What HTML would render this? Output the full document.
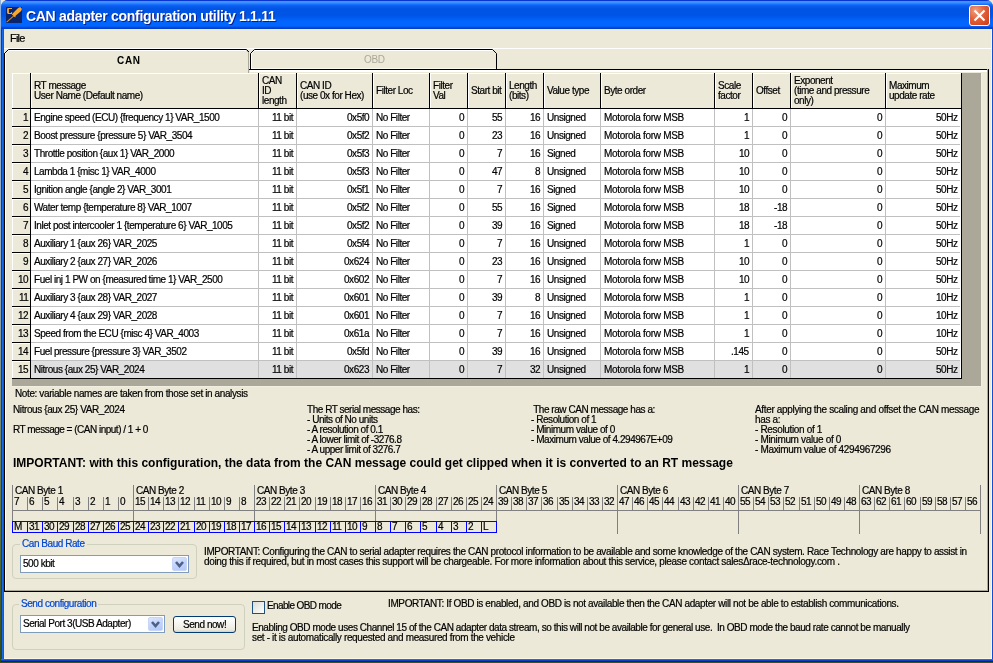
<!DOCTYPE html><html><head><meta charset='utf-8'><style>
*{margin:0;padding:0;box-sizing:border-box}
html,body{width:993px;height:663px;overflow:hidden}
body{position:relative;background:#ece9d8;font-family:"Liberation Sans",sans-serif}
.a{position:absolute}
.g{will-change:transform}
.t{position:absolute;will-change:transform;-webkit-text-stroke-width:0.2px;font-size:10px;line-height:10px;letter-spacing:-0.45px;white-space:pre;color:#000}
</style></head><body>
<div class=a style='left:0px;top:0px;width:1px;height:663px;background:linear-gradient(#8fb0e0,#9ab 40%,#5a7040 80%,#2f4a1a);'></div>
<div class=a style='left:0px;top:662px;width:993px;height:1px;background:#3a5220;'></div>
<div class=a style='left:1px;top:0;width:992px;height:662px;background:#0a4fe0;border-radius:7px 7px 0 0'></div>
<div class=a style='left:1px;top:29px;width:1px;height:633px;background:#0831d9;'></div>
<div class=a style='left:2px;top:29px;width:1px;height:633px;background:#166aee;'></div>
<div class=a style='left:3px;top:29px;width:1px;height:633px;background:#0f55e6;'></div>
<div class=a style='left:1px;top:659px;width:992px;height:1px;background:#1a6af2;'></div>
<div class=a style='left:1px;top:660px;width:992px;height:1px;background:#0a40d0;'></div>
<div class=a style='left:1px;top:661px;width:992px;height:1px;background:#001ea0;'></div>
<div class=a style='left:1px;top:0;width:992px;height:29px;border-radius:7px 7px 0 0;background:linear-gradient(180deg,#0a36d0 0px,#0a36d0 1px,#3d95ff 1px,#3a90ff 3px,#1a74ff 4px,#0a5cf0 6px,#0054e3 9px,#0055e6 16px,#005ff5 19px,#0066ff 22px,#0066ff 26px,#0052e8 27px,#0040c8 28px,#0040c8 29px)'></div>
<svg class=a style='left:6px;top:7px' width='16' height='16' viewBox='0 0 16 16'>
<rect x='0' y='0' width='16' height='16' fill='#0b2568'/>
<path d='M1.8 1 H6 V2.1 H2.9 V5.9 H5.2 V5 H6.1 V7 H2 L1.1 6.1 V1.7 Z' fill='#f7a934'/>
<path d='M6.6 6.6 L11.6 1.4 Q13.2 0 14.6 0.3 Q16 0.9 15.8 2.6 Q15.6 3.6 14.6 4.4 L9.2 9 Z' fill='#f7a934'/>
<path d='M5.8 7.6 L7 6.4 L9.6 8.8 L9.2 10.6 Z' fill='#f7a934'/>
<path d='M7.8 8.8 L0.6 15.2' stroke='#c98a3a' stroke-width='1.1'/>
</svg>
<div class='a g' style='left:26px;top:9px;font-size:14px;line-height:14px;font-weight:bold;color:#fff;white-space:pre;letter-spacing:-0.3px;text-shadow:1px 1px 0 #0a1e8c'>CAN adapter configuration utility 1.1.11</div>
<div class=a style='left:969px;top:5px;width:21px;height:21px;border:1px solid #fff;border-radius:3px;background:radial-gradient(circle at 30% 25%,#f0a080 0,#e2603a 45%,#cc3a10 100%)'></div>
<svg class=a style='left:969px;top:5px' width='21' height='21'><path d='M5.5 5.5 L15.5 15.5 M15.5 5.5 L5.5 15.5' stroke='#fff' stroke-width='2.2'/></svg>
<div class=a style='left:4px;top:29px;width:988px;height:630px;background:#ece9d8;'></div>
<div class=a style='left:4px;top:658px;width:988px;height:1px;background:#fcf6e0;'></div>
<div class=a style='left:991px;top:29px;width:1px;height:630px;background:#fcf6e0;'></div>
<div class=t style='left:10px;top:35px;font-size:11px;letter-spacing:-0.8px;top:33px;line-height:11px'>File</div>
<div class=a style='left:4px;top:48px;width:987px;height:1px;background:#fff;'></div>
<svg class=a style='left:0;top:44px' width='520' height='30'>
<path d='M4.5 30 L4.5 9.5 L8.5 5.5 L246.5 5.5 L249 8' stroke='#000' fill='none'/>
<path d='M5.5 30 L5.5 9.5 L8.5 6.5 L246 6.5' stroke='#fff' fill='none'/>
<path d='M248.5 30 L248.5 8.5 L246.5 6.5' stroke='#aca899' fill='none'/>
<path d='M250.5 25.5 L250.5 9.5 L254.5 5.5 L492.5 5.5 L496.5 9.5 L496.5 25.5' stroke='#000' fill='none'/>
<path d='M251.5 25 L251.5 9.5 L254.5 6.5 L492 6.5' stroke='#fff' fill='none'/>
<path d='M252 24.5 L495.5 24.5' stroke='#fbf8ec' fill='none'/>
<path d='M249 25.5 L520 25.5' stroke='#000' fill='none'/>
</svg>
<div class='a g' style='left:117px;top:56px;font-size:10px;line-height:10px;font-weight:bold;letter-spacing:0.7px;white-space:pre'>CAN</div>
<div class='a g' style='left:364px;top:55px;font-size:10px;line-height:10px;letter-spacing:-0.4px;color:#aca899;white-space:pre'>OBD</div>
<div class=a style='left:496px;top:69px;width:493px;height:1px;background:#000;'></div>
<div class=a style='left:250px;top:70px;width:738px;height:2px;background:#fff;'></div>
<div class=a style='left:4px;top:53px;width:1px;height:539px;background:#000;'></div>
<div class=a style='left:5px;top:53px;width:1px;height:537px;background:#fff;'></div>
<div class=a style='left:987px;top:69px;width:1px;height:522px;background:#aca899;'></div>
<div class=a style='left:988px;top:69px;width:1px;height:523px;background:#000;'></div>
<div class=a style='left:5px;top:590px;width:983px;height:1px;background:#aca899;'></div>
<div class=a style='left:4px;top:591px;width:985px;height:1px;background:#000;'></div>
<div class=a style='left:12px;top:73px;width:969px;height:313px;background:#aca899;'></div>
<div class=a style='left:981px;top:73px;width:1px;height:314px;background:#f1efe2;'></div>
<div class=a style='left:12px;top:386px;width:970px;height:1px;background:#f1efe2;'></div>
<div class=a style='left:12px;top:73px;width:950px;height:306px;background:#000;'></div>
<div class=a style='left:12px;top:73px;width:18px;height:35px;background:#ece9d8;border-top:1px solid #fff;border-left:1px solid #fff'></div>
<div class=a style='left:31px;top:73px;width:227px;height:35px;background:#ece9d8;border-top:1px solid #fff;border-left:1px solid #fff'></div>
<div class=a style='left:259px;top:73px;width:37px;height:35px;background:#ece9d8;border-top:1px solid #fff;border-left:1px solid #fff'></div>
<div class=a style='left:297px;top:73px;width:75px;height:35px;background:#ece9d8;border-top:1px solid #fff;border-left:1px solid #fff'></div>
<div class=a style='left:373px;top:73px;width:56px;height:35px;background:#ece9d8;border-top:1px solid #fff;border-left:1px solid #fff'></div>
<div class=a style='left:430px;top:73px;width:37px;height:35px;background:#ece9d8;border-top:1px solid #fff;border-left:1px solid #fff'></div>
<div class=a style='left:468px;top:73px;width:37px;height:35px;background:#ece9d8;border-top:1px solid #fff;border-left:1px solid #fff'></div>
<div class=a style='left:506px;top:73px;width:37px;height:35px;background:#ece9d8;border-top:1px solid #fff;border-left:1px solid #fff'></div>
<div class=a style='left:544px;top:73px;width:56px;height:35px;background:#ece9d8;border-top:1px solid #fff;border-left:1px solid #fff'></div>
<div class=a style='left:601px;top:73px;width:113px;height:35px;background:#ece9d8;border-top:1px solid #fff;border-left:1px solid #fff'></div>
<div class=a style='left:715px;top:73px;width:37px;height:35px;background:#ece9d8;border-top:1px solid #fff;border-left:1px solid #fff'></div>
<div class=a style='left:753px;top:73px;width:37px;height:35px;background:#ece9d8;border-top:1px solid #fff;border-left:1px solid #fff'></div>
<div class=a style='left:791px;top:73px;width:94px;height:35px;background:#ece9d8;border-top:1px solid #fff;border-left:1px solid #fff'></div>
<div class=a style='left:886px;top:73px;width:75px;height:35px;background:#ece9d8;border-top:1px solid #fff;border-left:1px solid #fff'></div>
<div class=a style='left:12px;top:109px;width:18px;height:17px;background:#ece9d8;border-top:1px solid #fff;border-left:1px solid #fff'></div>
<div class=a style='left:12px;top:127px;width:18px;height:17px;background:#ece9d8;border-top:1px solid #fff;border-left:1px solid #fff'></div>
<div class=a style='left:12px;top:145px;width:18px;height:17px;background:#ece9d8;border-top:1px solid #fff;border-left:1px solid #fff'></div>
<div class=a style='left:12px;top:163px;width:18px;height:17px;background:#ece9d8;border-top:1px solid #fff;border-left:1px solid #fff'></div>
<div class=a style='left:12px;top:181px;width:18px;height:17px;background:#ece9d8;border-top:1px solid #fff;border-left:1px solid #fff'></div>
<div class=a style='left:12px;top:199px;width:18px;height:17px;background:#ece9d8;border-top:1px solid #fff;border-left:1px solid #fff'></div>
<div class=a style='left:12px;top:217px;width:18px;height:17px;background:#ece9d8;border-top:1px solid #fff;border-left:1px solid #fff'></div>
<div class=a style='left:12px;top:235px;width:18px;height:17px;background:#ece9d8;border-top:1px solid #fff;border-left:1px solid #fff'></div>
<div class=a style='left:12px;top:253px;width:18px;height:17px;background:#ece9d8;border-top:1px solid #fff;border-left:1px solid #fff'></div>
<div class=a style='left:12px;top:271px;width:18px;height:17px;background:#ece9d8;border-top:1px solid #fff;border-left:1px solid #fff'></div>
<div class=a style='left:12px;top:289px;width:18px;height:17px;background:#ece9d8;border-top:1px solid #fff;border-left:1px solid #fff'></div>
<div class=a style='left:12px;top:307px;width:18px;height:17px;background:#ece9d8;border-top:1px solid #fff;border-left:1px solid #fff'></div>
<div class=a style='left:12px;top:325px;width:18px;height:17px;background:#ece9d8;border-top:1px solid #fff;border-left:1px solid #fff'></div>
<div class=a style='left:12px;top:343px;width:18px;height:17px;background:#ece9d8;border-top:1px solid #fff;border-left:1px solid #fff'></div>
<div class=a style='left:12px;top:361px;width:18px;height:17px;background:#ece9d8;border-top:1px solid #fff;border-left:1px solid #fff'></div>
<div class=a style='left:31px;top:109px;width:930px;height:269px;background:#c0c0c0;'></div>
<div class=a style='left:31px;top:109px;width:227px;height:17px;background:#fff;'></div>
<div class=a style='left:259px;top:109px;width:37px;height:17px;background:#fff;'></div>
<div class=a style='left:297px;top:109px;width:75px;height:17px;background:#fff;'></div>
<div class=a style='left:373px;top:109px;width:56px;height:17px;background:#fff;'></div>
<div class=a style='left:430px;top:109px;width:37px;height:17px;background:#fff;'></div>
<div class=a style='left:468px;top:109px;width:37px;height:17px;background:#fff;'></div>
<div class=a style='left:506px;top:109px;width:37px;height:17px;background:#fff;'></div>
<div class=a style='left:544px;top:109px;width:56px;height:17px;background:#fff;'></div>
<div class=a style='left:601px;top:109px;width:113px;height:17px;background:#fff;'></div>
<div class=a style='left:715px;top:109px;width:37px;height:17px;background:#fff;'></div>
<div class=a style='left:753px;top:109px;width:37px;height:17px;background:#fff;'></div>
<div class=a style='left:791px;top:109px;width:94px;height:17px;background:#fff;'></div>
<div class=a style='left:886px;top:109px;width:75px;height:17px;background:#fff;'></div>
<div class=a style='left:31px;top:127px;width:227px;height:17px;background:#fff;'></div>
<div class=a style='left:259px;top:127px;width:37px;height:17px;background:#fff;'></div>
<div class=a style='left:297px;top:127px;width:75px;height:17px;background:#fff;'></div>
<div class=a style='left:373px;top:127px;width:56px;height:17px;background:#fff;'></div>
<div class=a style='left:430px;top:127px;width:37px;height:17px;background:#fff;'></div>
<div class=a style='left:468px;top:127px;width:37px;height:17px;background:#fff;'></div>
<div class=a style='left:506px;top:127px;width:37px;height:17px;background:#fff;'></div>
<div class=a style='left:544px;top:127px;width:56px;height:17px;background:#fff;'></div>
<div class=a style='left:601px;top:127px;width:113px;height:17px;background:#fff;'></div>
<div class=a style='left:715px;top:127px;width:37px;height:17px;background:#fff;'></div>
<div class=a style='left:753px;top:127px;width:37px;height:17px;background:#fff;'></div>
<div class=a style='left:791px;top:127px;width:94px;height:17px;background:#fff;'></div>
<div class=a style='left:886px;top:127px;width:75px;height:17px;background:#fff;'></div>
<div class=a style='left:31px;top:145px;width:227px;height:17px;background:#fff;'></div>
<div class=a style='left:259px;top:145px;width:37px;height:17px;background:#fff;'></div>
<div class=a style='left:297px;top:145px;width:75px;height:17px;background:#fff;'></div>
<div class=a style='left:373px;top:145px;width:56px;height:17px;background:#fff;'></div>
<div class=a style='left:430px;top:145px;width:37px;height:17px;background:#fff;'></div>
<div class=a style='left:468px;top:145px;width:37px;height:17px;background:#fff;'></div>
<div class=a style='left:506px;top:145px;width:37px;height:17px;background:#fff;'></div>
<div class=a style='left:544px;top:145px;width:56px;height:17px;background:#fff;'></div>
<div class=a style='left:601px;top:145px;width:113px;height:17px;background:#fff;'></div>
<div class=a style='left:715px;top:145px;width:37px;height:17px;background:#fff;'></div>
<div class=a style='left:753px;top:145px;width:37px;height:17px;background:#fff;'></div>
<div class=a style='left:791px;top:145px;width:94px;height:17px;background:#fff;'></div>
<div class=a style='left:886px;top:145px;width:75px;height:17px;background:#fff;'></div>
<div class=a style='left:31px;top:163px;width:227px;height:17px;background:#fff;'></div>
<div class=a style='left:259px;top:163px;width:37px;height:17px;background:#fff;'></div>
<div class=a style='left:297px;top:163px;width:75px;height:17px;background:#fff;'></div>
<div class=a style='left:373px;top:163px;width:56px;height:17px;background:#fff;'></div>
<div class=a style='left:430px;top:163px;width:37px;height:17px;background:#fff;'></div>
<div class=a style='left:468px;top:163px;width:37px;height:17px;background:#fff;'></div>
<div class=a style='left:506px;top:163px;width:37px;height:17px;background:#fff;'></div>
<div class=a style='left:544px;top:163px;width:56px;height:17px;background:#fff;'></div>
<div class=a style='left:601px;top:163px;width:113px;height:17px;background:#fff;'></div>
<div class=a style='left:715px;top:163px;width:37px;height:17px;background:#fff;'></div>
<div class=a style='left:753px;top:163px;width:37px;height:17px;background:#fff;'></div>
<div class=a style='left:791px;top:163px;width:94px;height:17px;background:#fff;'></div>
<div class=a style='left:886px;top:163px;width:75px;height:17px;background:#fff;'></div>
<div class=a style='left:31px;top:181px;width:227px;height:17px;background:#fff;'></div>
<div class=a style='left:259px;top:181px;width:37px;height:17px;background:#fff;'></div>
<div class=a style='left:297px;top:181px;width:75px;height:17px;background:#fff;'></div>
<div class=a style='left:373px;top:181px;width:56px;height:17px;background:#fff;'></div>
<div class=a style='left:430px;top:181px;width:37px;height:17px;background:#fff;'></div>
<div class=a style='left:468px;top:181px;width:37px;height:17px;background:#fff;'></div>
<div class=a style='left:506px;top:181px;width:37px;height:17px;background:#fff;'></div>
<div class=a style='left:544px;top:181px;width:56px;height:17px;background:#fff;'></div>
<div class=a style='left:601px;top:181px;width:113px;height:17px;background:#fff;'></div>
<div class=a style='left:715px;top:181px;width:37px;height:17px;background:#fff;'></div>
<div class=a style='left:753px;top:181px;width:37px;height:17px;background:#fff;'></div>
<div class=a style='left:791px;top:181px;width:94px;height:17px;background:#fff;'></div>
<div class=a style='left:886px;top:181px;width:75px;height:17px;background:#fff;'></div>
<div class=a style='left:31px;top:199px;width:227px;height:17px;background:#fff;'></div>
<div class=a style='left:259px;top:199px;width:37px;height:17px;background:#fff;'></div>
<div class=a style='left:297px;top:199px;width:75px;height:17px;background:#fff;'></div>
<div class=a style='left:373px;top:199px;width:56px;height:17px;background:#fff;'></div>
<div class=a style='left:430px;top:199px;width:37px;height:17px;background:#fff;'></div>
<div class=a style='left:468px;top:199px;width:37px;height:17px;background:#fff;'></div>
<div class=a style='left:506px;top:199px;width:37px;height:17px;background:#fff;'></div>
<div class=a style='left:544px;top:199px;width:56px;height:17px;background:#fff;'></div>
<div class=a style='left:601px;top:199px;width:113px;height:17px;background:#fff;'></div>
<div class=a style='left:715px;top:199px;width:37px;height:17px;background:#fff;'></div>
<div class=a style='left:753px;top:199px;width:37px;height:17px;background:#fff;'></div>
<div class=a style='left:791px;top:199px;width:94px;height:17px;background:#fff;'></div>
<div class=a style='left:886px;top:199px;width:75px;height:17px;background:#fff;'></div>
<div class=a style='left:31px;top:217px;width:227px;height:17px;background:#fff;'></div>
<div class=a style='left:259px;top:217px;width:37px;height:17px;background:#fff;'></div>
<div class=a style='left:297px;top:217px;width:75px;height:17px;background:#fff;'></div>
<div class=a style='left:373px;top:217px;width:56px;height:17px;background:#fff;'></div>
<div class=a style='left:430px;top:217px;width:37px;height:17px;background:#fff;'></div>
<div class=a style='left:468px;top:217px;width:37px;height:17px;background:#fff;'></div>
<div class=a style='left:506px;top:217px;width:37px;height:17px;background:#fff;'></div>
<div class=a style='left:544px;top:217px;width:56px;height:17px;background:#fff;'></div>
<div class=a style='left:601px;top:217px;width:113px;height:17px;background:#fff;'></div>
<div class=a style='left:715px;top:217px;width:37px;height:17px;background:#fff;'></div>
<div class=a style='left:753px;top:217px;width:37px;height:17px;background:#fff;'></div>
<div class=a style='left:791px;top:217px;width:94px;height:17px;background:#fff;'></div>
<div class=a style='left:886px;top:217px;width:75px;height:17px;background:#fff;'></div>
<div class=a style='left:31px;top:235px;width:227px;height:17px;background:#fff;'></div>
<div class=a style='left:259px;top:235px;width:37px;height:17px;background:#fff;'></div>
<div class=a style='left:297px;top:235px;width:75px;height:17px;background:#fff;'></div>
<div class=a style='left:373px;top:235px;width:56px;height:17px;background:#fff;'></div>
<div class=a style='left:430px;top:235px;width:37px;height:17px;background:#fff;'></div>
<div class=a style='left:468px;top:235px;width:37px;height:17px;background:#fff;'></div>
<div class=a style='left:506px;top:235px;width:37px;height:17px;background:#fff;'></div>
<div class=a style='left:544px;top:235px;width:56px;height:17px;background:#fff;'></div>
<div class=a style='left:601px;top:235px;width:113px;height:17px;background:#fff;'></div>
<div class=a style='left:715px;top:235px;width:37px;height:17px;background:#fff;'></div>
<div class=a style='left:753px;top:235px;width:37px;height:17px;background:#fff;'></div>
<div class=a style='left:791px;top:235px;width:94px;height:17px;background:#fff;'></div>
<div class=a style='left:886px;top:235px;width:75px;height:17px;background:#fff;'></div>
<div class=a style='left:31px;top:253px;width:227px;height:17px;background:#fff;'></div>
<div class=a style='left:259px;top:253px;width:37px;height:17px;background:#fff;'></div>
<div class=a style='left:297px;top:253px;width:75px;height:17px;background:#fff;'></div>
<div class=a style='left:373px;top:253px;width:56px;height:17px;background:#fff;'></div>
<div class=a style='left:430px;top:253px;width:37px;height:17px;background:#fff;'></div>
<div class=a style='left:468px;top:253px;width:37px;height:17px;background:#fff;'></div>
<div class=a style='left:506px;top:253px;width:37px;height:17px;background:#fff;'></div>
<div class=a style='left:544px;top:253px;width:56px;height:17px;background:#fff;'></div>
<div class=a style='left:601px;top:253px;width:113px;height:17px;background:#fff;'></div>
<div class=a style='left:715px;top:253px;width:37px;height:17px;background:#fff;'></div>
<div class=a style='left:753px;top:253px;width:37px;height:17px;background:#fff;'></div>
<div class=a style='left:791px;top:253px;width:94px;height:17px;background:#fff;'></div>
<div class=a style='left:886px;top:253px;width:75px;height:17px;background:#fff;'></div>
<div class=a style='left:31px;top:271px;width:227px;height:17px;background:#fff;'></div>
<div class=a style='left:259px;top:271px;width:37px;height:17px;background:#fff;'></div>
<div class=a style='left:297px;top:271px;width:75px;height:17px;background:#fff;'></div>
<div class=a style='left:373px;top:271px;width:56px;height:17px;background:#fff;'></div>
<div class=a style='left:430px;top:271px;width:37px;height:17px;background:#fff;'></div>
<div class=a style='left:468px;top:271px;width:37px;height:17px;background:#fff;'></div>
<div class=a style='left:506px;top:271px;width:37px;height:17px;background:#fff;'></div>
<div class=a style='left:544px;top:271px;width:56px;height:17px;background:#fff;'></div>
<div class=a style='left:601px;top:271px;width:113px;height:17px;background:#fff;'></div>
<div class=a style='left:715px;top:271px;width:37px;height:17px;background:#fff;'></div>
<div class=a style='left:753px;top:271px;width:37px;height:17px;background:#fff;'></div>
<div class=a style='left:791px;top:271px;width:94px;height:17px;background:#fff;'></div>
<div class=a style='left:886px;top:271px;width:75px;height:17px;background:#fff;'></div>
<div class=a style='left:31px;top:289px;width:227px;height:17px;background:#fff;'></div>
<div class=a style='left:259px;top:289px;width:37px;height:17px;background:#fff;'></div>
<div class=a style='left:297px;top:289px;width:75px;height:17px;background:#fff;'></div>
<div class=a style='left:373px;top:289px;width:56px;height:17px;background:#fff;'></div>
<div class=a style='left:430px;top:289px;width:37px;height:17px;background:#fff;'></div>
<div class=a style='left:468px;top:289px;width:37px;height:17px;background:#fff;'></div>
<div class=a style='left:506px;top:289px;width:37px;height:17px;background:#fff;'></div>
<div class=a style='left:544px;top:289px;width:56px;height:17px;background:#fff;'></div>
<div class=a style='left:601px;top:289px;width:113px;height:17px;background:#fff;'></div>
<div class=a style='left:715px;top:289px;width:37px;height:17px;background:#fff;'></div>
<div class=a style='left:753px;top:289px;width:37px;height:17px;background:#fff;'></div>
<div class=a style='left:791px;top:289px;width:94px;height:17px;background:#fff;'></div>
<div class=a style='left:886px;top:289px;width:75px;height:17px;background:#fff;'></div>
<div class=a style='left:31px;top:307px;width:227px;height:17px;background:#fff;'></div>
<div class=a style='left:259px;top:307px;width:37px;height:17px;background:#fff;'></div>
<div class=a style='left:297px;top:307px;width:75px;height:17px;background:#fff;'></div>
<div class=a style='left:373px;top:307px;width:56px;height:17px;background:#fff;'></div>
<div class=a style='left:430px;top:307px;width:37px;height:17px;background:#fff;'></div>
<div class=a style='left:468px;top:307px;width:37px;height:17px;background:#fff;'></div>
<div class=a style='left:506px;top:307px;width:37px;height:17px;background:#fff;'></div>
<div class=a style='left:544px;top:307px;width:56px;height:17px;background:#fff;'></div>
<div class=a style='left:601px;top:307px;width:113px;height:17px;background:#fff;'></div>
<div class=a style='left:715px;top:307px;width:37px;height:17px;background:#fff;'></div>
<div class=a style='left:753px;top:307px;width:37px;height:17px;background:#fff;'></div>
<div class=a style='left:791px;top:307px;width:94px;height:17px;background:#fff;'></div>
<div class=a style='left:886px;top:307px;width:75px;height:17px;background:#fff;'></div>
<div class=a style='left:31px;top:325px;width:227px;height:17px;background:#fff;'></div>
<div class=a style='left:259px;top:325px;width:37px;height:17px;background:#fff;'></div>
<div class=a style='left:297px;top:325px;width:75px;height:17px;background:#fff;'></div>
<div class=a style='left:373px;top:325px;width:56px;height:17px;background:#fff;'></div>
<div class=a style='left:430px;top:325px;width:37px;height:17px;background:#fff;'></div>
<div class=a style='left:468px;top:325px;width:37px;height:17px;background:#fff;'></div>
<div class=a style='left:506px;top:325px;width:37px;height:17px;background:#fff;'></div>
<div class=a style='left:544px;top:325px;width:56px;height:17px;background:#fff;'></div>
<div class=a style='left:601px;top:325px;width:113px;height:17px;background:#fff;'></div>
<div class=a style='left:715px;top:325px;width:37px;height:17px;background:#fff;'></div>
<div class=a style='left:753px;top:325px;width:37px;height:17px;background:#fff;'></div>
<div class=a style='left:791px;top:325px;width:94px;height:17px;background:#fff;'></div>
<div class=a style='left:886px;top:325px;width:75px;height:17px;background:#fff;'></div>
<div class=a style='left:31px;top:343px;width:227px;height:17px;background:#fff;'></div>
<div class=a style='left:259px;top:343px;width:37px;height:17px;background:#fff;'></div>
<div class=a style='left:297px;top:343px;width:75px;height:17px;background:#fff;'></div>
<div class=a style='left:373px;top:343px;width:56px;height:17px;background:#fff;'></div>
<div class=a style='left:430px;top:343px;width:37px;height:17px;background:#fff;'></div>
<div class=a style='left:468px;top:343px;width:37px;height:17px;background:#fff;'></div>
<div class=a style='left:506px;top:343px;width:37px;height:17px;background:#fff;'></div>
<div class=a style='left:544px;top:343px;width:56px;height:17px;background:#fff;'></div>
<div class=a style='left:601px;top:343px;width:113px;height:17px;background:#fff;'></div>
<div class=a style='left:715px;top:343px;width:37px;height:17px;background:#fff;'></div>
<div class=a style='left:753px;top:343px;width:37px;height:17px;background:#fff;'></div>
<div class=a style='left:791px;top:343px;width:94px;height:17px;background:#fff;'></div>
<div class=a style='left:886px;top:343px;width:75px;height:17px;background:#fff;'></div>
<div class=a style='left:31px;top:361px;width:227px;height:17px;background:#e0e0e0;'></div>
<div class=a style='left:259px;top:361px;width:37px;height:17px;background:#e0e0e0;'></div>
<div class=a style='left:297px;top:361px;width:75px;height:17px;background:#e0e0e0;'></div>
<div class=a style='left:373px;top:361px;width:56px;height:17px;background:#e0e0e0;'></div>
<div class=a style='left:430px;top:361px;width:37px;height:17px;background:#e0e0e0;'></div>
<div class=a style='left:468px;top:361px;width:37px;height:17px;background:#e0e0e0;'></div>
<div class=a style='left:506px;top:361px;width:37px;height:17px;background:#e0e0e0;'></div>
<div class=a style='left:544px;top:361px;width:56px;height:17px;background:#e0e0e0;'></div>
<div class=a style='left:601px;top:361px;width:113px;height:17px;background:#e0e0e0;'></div>
<div class=a style='left:715px;top:361px;width:37px;height:17px;background:#e0e0e0;'></div>
<div class=a style='left:753px;top:361px;width:37px;height:17px;background:#e0e0e0;'></div>
<div class=a style='left:791px;top:361px;width:94px;height:17px;background:#e0e0e0;'></div>
<div class=a style='left:886px;top:361px;width:75px;height:17px;background:#e0e0e0;'></div>
<div class=a style='left:960px;top:109px;width:1px;height:269px;background:#fff;'></div>
<div class=a style='left:31px;top:378px;width:930px;height:1px;background:#000;'></div>
<div class=t style='left:34px;top:81px;'>RT message</div>
<div class=t style='left:34px;top:91px;'>User Name (Default name)</div>
<div class=t style='left:262px;top:76px;'>CAN</div>
<div class=t style='left:262px;top:86px;'>ID</div>
<div class=t style='left:262px;top:96px;'>length</div>
<div class=t style='left:300px;top:81px;'>CAN ID</div>
<div class=t style='left:300px;top:91px;'>(use 0x for Hex)</div>
<div class=t style='left:376px;top:86px;'>Filter Loc</div>
<div class=t style='left:433px;top:81px;'>Filter</div>
<div class=t style='left:433px;top:91px;'>Val</div>
<div class=t style='left:471px;top:86px;'>Start bit</div>
<div class=t style='left:509px;top:81px;'>Length</div>
<div class=t style='left:509px;top:91px;'>(bits)</div>
<div class=t style='left:547px;top:86px;'>Value type</div>
<div class=t style='left:604px;top:86px;'>Byte order</div>
<div class=t style='left:718px;top:81px;'>Scale</div>
<div class=t style='left:718px;top:91px;'>factor</div>
<div class=t style='left:756px;top:86px;'>Offset</div>
<div class=t style='left:794px;top:76px;'>Exponent</div>
<div class=t style='left:794px;top:86px;'>(time and pressure</div>
<div class=t style='left:794px;top:96px;'>only)</div>
<div class=t style='left:889px;top:81px;'>Maximum</div>
<div class=t style='left:889px;top:91px;'>update rate</div>
<div class=t style='right:965px;top:113px;text-align:right;'>1</div>
<div class=t style='left:34px;top:113px;'>Engine speed (ECU) {frequency 1} VAR_1500</div>
<div class=t style='right:700px;top:113px;text-align:right;'>11 bit</div>
<div class=t style='right:624px;top:113px;text-align:right;'>0x5f0</div>
<div class=t style='left:376px;top:113px;'>No Filter</div>
<div class=t style='right:529px;top:113px;text-align:right;'>0</div>
<div class=t style='right:491px;top:113px;text-align:right;'>55</div>
<div class=t style='right:453px;top:113px;text-align:right;'>16</div>
<div class=t style='left:547px;top:113px;'>Unsigned</div>
<div class=t style='left:604px;top:113px;letter-spacing:-0.3px;'>Motorola forw MSB</div>
<div class=t style='right:244px;top:113px;text-align:right;'>1</div>
<div class=t style='right:206px;top:113px;text-align:right;'>0</div>
<div class=t style='right:111px;top:113px;text-align:right;'>0</div>
<div class=t style='right:35px;top:113px;text-align:right;'>50Hz</div>
<div class=t style='right:965px;top:131px;text-align:right;'>2</div>
<div class=t style='left:34px;top:131px;'>Boost pressure {pressure 5} VAR_3504</div>
<div class=t style='right:700px;top:131px;text-align:right;'>11 bit</div>
<div class=t style='right:624px;top:131px;text-align:right;'>0x5f2</div>
<div class=t style='left:376px;top:131px;'>No Filter</div>
<div class=t style='right:529px;top:131px;text-align:right;'>0</div>
<div class=t style='right:491px;top:131px;text-align:right;'>23</div>
<div class=t style='right:453px;top:131px;text-align:right;'>16</div>
<div class=t style='left:547px;top:131px;'>Unsigned</div>
<div class=t style='left:604px;top:131px;letter-spacing:-0.3px;'>Motorola forw MSB</div>
<div class=t style='right:244px;top:131px;text-align:right;'>1</div>
<div class=t style='right:206px;top:131px;text-align:right;'>0</div>
<div class=t style='right:111px;top:131px;text-align:right;'>0</div>
<div class=t style='right:35px;top:131px;text-align:right;'>50Hz</div>
<div class=t style='right:965px;top:149px;text-align:right;'>3</div>
<div class=t style='left:34px;top:149px;'>Throttle position {aux 1} VAR_2000</div>
<div class=t style='right:700px;top:149px;text-align:right;'>11 bit</div>
<div class=t style='right:624px;top:149px;text-align:right;'>0x5f3</div>
<div class=t style='left:376px;top:149px;'>No Filter</div>
<div class=t style='right:529px;top:149px;text-align:right;'>0</div>
<div class=t style='right:491px;top:149px;text-align:right;'>7</div>
<div class=t style='right:453px;top:149px;text-align:right;'>16</div>
<div class=t style='left:547px;top:149px;'>Signed</div>
<div class=t style='left:604px;top:149px;letter-spacing:-0.3px;'>Motorola forw MSB</div>
<div class=t style='right:244px;top:149px;text-align:right;'>10</div>
<div class=t style='right:206px;top:149px;text-align:right;'>0</div>
<div class=t style='right:111px;top:149px;text-align:right;'>0</div>
<div class=t style='right:35px;top:149px;text-align:right;'>50Hz</div>
<div class=t style='right:965px;top:167px;text-align:right;'>4</div>
<div class=t style='left:34px;top:167px;'>Lambda 1 {misc 1} VAR_4000</div>
<div class=t style='right:700px;top:167px;text-align:right;'>11 bit</div>
<div class=t style='right:624px;top:167px;text-align:right;'>0x5f3</div>
<div class=t style='left:376px;top:167px;'>No Filter</div>
<div class=t style='right:529px;top:167px;text-align:right;'>0</div>
<div class=t style='right:491px;top:167px;text-align:right;'>47</div>
<div class=t style='right:453px;top:167px;text-align:right;'>8</div>
<div class=t style='left:547px;top:167px;'>Unsigned</div>
<div class=t style='left:604px;top:167px;letter-spacing:-0.3px;'>Motorola forw MSB</div>
<div class=t style='right:244px;top:167px;text-align:right;'>10</div>
<div class=t style='right:206px;top:167px;text-align:right;'>0</div>
<div class=t style='right:111px;top:167px;text-align:right;'>0</div>
<div class=t style='right:35px;top:167px;text-align:right;'>50Hz</div>
<div class=t style='right:965px;top:185px;text-align:right;'>5</div>
<div class=t style='left:34px;top:185px;'>Ignition angle {angle 2} VAR_3001</div>
<div class=t style='right:700px;top:185px;text-align:right;'>11 bit</div>
<div class=t style='right:624px;top:185px;text-align:right;'>0x5f1</div>
<div class=t style='left:376px;top:185px;'>No Filter</div>
<div class=t style='right:529px;top:185px;text-align:right;'>0</div>
<div class=t style='right:491px;top:185px;text-align:right;'>7</div>
<div class=t style='right:453px;top:185px;text-align:right;'>16</div>
<div class=t style='left:547px;top:185px;'>Signed</div>
<div class=t style='left:604px;top:185px;letter-spacing:-0.3px;'>Motorola forw MSB</div>
<div class=t style='right:244px;top:185px;text-align:right;'>10</div>
<div class=t style='right:206px;top:185px;text-align:right;'>0</div>
<div class=t style='right:111px;top:185px;text-align:right;'>0</div>
<div class=t style='right:35px;top:185px;text-align:right;'>50Hz</div>
<div class=t style='right:965px;top:203px;text-align:right;'>6</div>
<div class=t style='left:34px;top:203px;'>Water temp {temperature 8} VAR_1007</div>
<div class=t style='right:700px;top:203px;text-align:right;'>11 bit</div>
<div class=t style='right:624px;top:203px;text-align:right;'>0x5f2</div>
<div class=t style='left:376px;top:203px;'>No Filter</div>
<div class=t style='right:529px;top:203px;text-align:right;'>0</div>
<div class=t style='right:491px;top:203px;text-align:right;'>55</div>
<div class=t style='right:453px;top:203px;text-align:right;'>16</div>
<div class=t style='left:547px;top:203px;'>Signed</div>
<div class=t style='left:604px;top:203px;letter-spacing:-0.3px;'>Motorola forw MSB</div>
<div class=t style='right:244px;top:203px;text-align:right;'>18</div>
<div class=t style='right:206px;top:203px;text-align:right;'>-18</div>
<div class=t style='right:111px;top:203px;text-align:right;'>0</div>
<div class=t style='right:35px;top:203px;text-align:right;'>50Hz</div>
<div class=t style='right:965px;top:221px;text-align:right;'>7</div>
<div class=t style='left:34px;top:221px;'>Inlet post intercooler 1 {temperature 6} VAR_1005</div>
<div class=t style='right:700px;top:221px;text-align:right;'>11 bit</div>
<div class=t style='right:624px;top:221px;text-align:right;'>0x5f2</div>
<div class=t style='left:376px;top:221px;'>No Filter</div>
<div class=t style='right:529px;top:221px;text-align:right;'>0</div>
<div class=t style='right:491px;top:221px;text-align:right;'>39</div>
<div class=t style='right:453px;top:221px;text-align:right;'>16</div>
<div class=t style='left:547px;top:221px;'>Signed</div>
<div class=t style='left:604px;top:221px;letter-spacing:-0.3px;'>Motorola forw MSB</div>
<div class=t style='right:244px;top:221px;text-align:right;'>18</div>
<div class=t style='right:206px;top:221px;text-align:right;'>-18</div>
<div class=t style='right:111px;top:221px;text-align:right;'>0</div>
<div class=t style='right:35px;top:221px;text-align:right;'>50Hz</div>
<div class=t style='right:965px;top:239px;text-align:right;'>8</div>
<div class=t style='left:34px;top:239px;'>Auxiliary 1 {aux 26} VAR_2025</div>
<div class=t style='right:700px;top:239px;text-align:right;'>11 bit</div>
<div class=t style='right:624px;top:239px;text-align:right;'>0x5f4</div>
<div class=t style='left:376px;top:239px;'>No Filter</div>
<div class=t style='right:529px;top:239px;text-align:right;'>0</div>
<div class=t style='right:491px;top:239px;text-align:right;'>7</div>
<div class=t style='right:453px;top:239px;text-align:right;'>16</div>
<div class=t style='left:547px;top:239px;'>Unsigned</div>
<div class=t style='left:604px;top:239px;letter-spacing:-0.3px;'>Motorola forw MSB</div>
<div class=t style='right:244px;top:239px;text-align:right;'>1</div>
<div class=t style='right:206px;top:239px;text-align:right;'>0</div>
<div class=t style='right:111px;top:239px;text-align:right;'>0</div>
<div class=t style='right:35px;top:239px;text-align:right;'>50Hz</div>
<div class=t style='right:965px;top:257px;text-align:right;'>9</div>
<div class=t style='left:34px;top:257px;'>Auxiliary 2 {aux 27} VAR_2026</div>
<div class=t style='right:700px;top:257px;text-align:right;'>11 bit</div>
<div class=t style='right:624px;top:257px;text-align:right;'>0x624</div>
<div class=t style='left:376px;top:257px;'>No Filter</div>
<div class=t style='right:529px;top:257px;text-align:right;'>0</div>
<div class=t style='right:491px;top:257px;text-align:right;'>23</div>
<div class=t style='right:453px;top:257px;text-align:right;'>16</div>
<div class=t style='left:547px;top:257px;'>Unsigned</div>
<div class=t style='left:604px;top:257px;letter-spacing:-0.3px;'>Motorola forw MSB</div>
<div class=t style='right:244px;top:257px;text-align:right;'>10</div>
<div class=t style='right:206px;top:257px;text-align:right;'>0</div>
<div class=t style='right:111px;top:257px;text-align:right;'>0</div>
<div class=t style='right:35px;top:257px;text-align:right;'>50Hz</div>
<div class=t style='right:965px;top:275px;text-align:right;'>10</div>
<div class=t style='left:34px;top:275px;'>Fuel inj 1 PW on {measured time 1} VAR_2500</div>
<div class=t style='right:700px;top:275px;text-align:right;'>11 bit</div>
<div class=t style='right:624px;top:275px;text-align:right;'>0x602</div>
<div class=t style='left:376px;top:275px;'>No Filter</div>
<div class=t style='right:529px;top:275px;text-align:right;'>0</div>
<div class=t style='right:491px;top:275px;text-align:right;'>7</div>
<div class=t style='right:453px;top:275px;text-align:right;'>16</div>
<div class=t style='left:547px;top:275px;'>Unsigned</div>
<div class=t style='left:604px;top:275px;letter-spacing:-0.3px;'>Motorola forw MSB</div>
<div class=t style='right:244px;top:275px;text-align:right;'>10</div>
<div class=t style='right:206px;top:275px;text-align:right;'>0</div>
<div class=t style='right:111px;top:275px;text-align:right;'>0</div>
<div class=t style='right:35px;top:275px;text-align:right;'>50Hz</div>
<div class=t style='right:965px;top:293px;text-align:right;'>11</div>
<div class=t style='left:34px;top:293px;'>Auxiliary 3 {aux 28} VAR_2027</div>
<div class=t style='right:700px;top:293px;text-align:right;'>11 bit</div>
<div class=t style='right:624px;top:293px;text-align:right;'>0x601</div>
<div class=t style='left:376px;top:293px;'>No Filter</div>
<div class=t style='right:529px;top:293px;text-align:right;'>0</div>
<div class=t style='right:491px;top:293px;text-align:right;'>39</div>
<div class=t style='right:453px;top:293px;text-align:right;'>8</div>
<div class=t style='left:547px;top:293px;'>Unsigned</div>
<div class=t style='left:604px;top:293px;letter-spacing:-0.3px;'>Motorola forw MSB</div>
<div class=t style='right:244px;top:293px;text-align:right;'>1</div>
<div class=t style='right:206px;top:293px;text-align:right;'>0</div>
<div class=t style='right:111px;top:293px;text-align:right;'>0</div>
<div class=t style='right:35px;top:293px;text-align:right;'>10Hz</div>
<div class=t style='right:965px;top:311px;text-align:right;'>12</div>
<div class=t style='left:34px;top:311px;'>Auxiliary 4 {aux 29} VAR_2028</div>
<div class=t style='right:700px;top:311px;text-align:right;'>11 bit</div>
<div class=t style='right:624px;top:311px;text-align:right;'>0x601</div>
<div class=t style='left:376px;top:311px;'>No Filter</div>
<div class=t style='right:529px;top:311px;text-align:right;'>0</div>
<div class=t style='right:491px;top:311px;text-align:right;'>7</div>
<div class=t style='right:453px;top:311px;text-align:right;'>16</div>
<div class=t style='left:547px;top:311px;'>Unsigned</div>
<div class=t style='left:604px;top:311px;letter-spacing:-0.3px;'>Motorola forw MSB</div>
<div class=t style='right:244px;top:311px;text-align:right;'>1</div>
<div class=t style='right:206px;top:311px;text-align:right;'>0</div>
<div class=t style='right:111px;top:311px;text-align:right;'>0</div>
<div class=t style='right:35px;top:311px;text-align:right;'>10Hz</div>
<div class=t style='right:965px;top:329px;text-align:right;'>13</div>
<div class=t style='left:34px;top:329px;'>Speed from the ECU {misc 4} VAR_4003</div>
<div class=t style='right:700px;top:329px;text-align:right;'>11 bit</div>
<div class=t style='right:624px;top:329px;text-align:right;'>0x61a</div>
<div class=t style='left:376px;top:329px;'>No Filter</div>
<div class=t style='right:529px;top:329px;text-align:right;'>0</div>
<div class=t style='right:491px;top:329px;text-align:right;'>7</div>
<div class=t style='right:453px;top:329px;text-align:right;'>16</div>
<div class=t style='left:547px;top:329px;'>Unsigned</div>
<div class=t style='left:604px;top:329px;letter-spacing:-0.3px;'>Motorola forw MSB</div>
<div class=t style='right:244px;top:329px;text-align:right;'>1</div>
<div class=t style='right:206px;top:329px;text-align:right;'>0</div>
<div class=t style='right:111px;top:329px;text-align:right;'>0</div>
<div class=t style='right:35px;top:329px;text-align:right;'>10Hz</div>
<div class=t style='right:965px;top:347px;text-align:right;'>14</div>
<div class=t style='left:34px;top:347px;'>Fuel pressure {pressure 3} VAR_3502</div>
<div class=t style='right:700px;top:347px;text-align:right;'>11 bit</div>
<div class=t style='right:624px;top:347px;text-align:right;'>0x5fd</div>
<div class=t style='left:376px;top:347px;'>No Filter</div>
<div class=t style='right:529px;top:347px;text-align:right;'>0</div>
<div class=t style='right:491px;top:347px;text-align:right;'>39</div>
<div class=t style='right:453px;top:347px;text-align:right;'>16</div>
<div class=t style='left:547px;top:347px;'>Unsigned</div>
<div class=t style='left:604px;top:347px;letter-spacing:-0.3px;'>Motorola forw MSB</div>
<div class=t style='right:244px;top:347px;text-align:right;'>.145</div>
<div class=t style='right:206px;top:347px;text-align:right;'>0</div>
<div class=t style='right:111px;top:347px;text-align:right;'>0</div>
<div class=t style='right:35px;top:347px;text-align:right;'>50Hz</div>
<div class=t style='right:965px;top:365px;text-align:right;'>15</div>
<div class=t style='left:34px;top:365px;'>Nitrous {aux 25} VAR_2024</div>
<div class=t style='right:700px;top:365px;text-align:right;'>11 bit</div>
<div class=t style='right:624px;top:365px;text-align:right;'>0x623</div>
<div class=t style='left:376px;top:365px;'>No Filter</div>
<div class=t style='right:529px;top:365px;text-align:right;'>0</div>
<div class=t style='right:491px;top:365px;text-align:right;'>7</div>
<div class=t style='right:453px;top:365px;text-align:right;'>32</div>
<div class=t style='left:547px;top:365px;'>Unsigned</div>
<div class=t style='left:604px;top:365px;letter-spacing:-0.3px;'>Motorola forw MSB</div>
<div class=t style='right:244px;top:365px;text-align:right;'>1</div>
<div class=t style='right:206px;top:365px;text-align:right;'>0</div>
<div class=t style='right:111px;top:365px;text-align:right;'>0</div>
<div class=t style='right:35px;top:365px;text-align:right;'>50Hz</div>
<div class=t style='left:15px;top:389px;letter-spacing:-0.385px;'>Note: variable names are taken from those set in analysis</div>
<div class=t style='left:13px;top:405px;letter-spacing:-0.4px;'>Nitrous {aux 25} VAR_2024</div>
<div class=t style='left:13px;top:425px;letter-spacing:-0.5px;'>RT message = (CAN input) / 1 + 0</div>
<div class=t style='left:307px;top:405px;letter-spacing:-0.47px;'>The RT serial message has:</div>
<div class=t style='left:307px;top:415px;letter-spacing:-0.47px;'>- Units of No units</div>
<div class=t style='left:307px;top:425px;letter-spacing:-0.47px;'>- A resolution of 0.1</div>
<div class=t style='left:307px;top:435px;letter-spacing:-0.47px;'>- A lower limit of -3276.8</div>
<div class=t style='left:307px;top:445px;letter-spacing:-0.47px;'>- A upper limit of 3276.7</div>
<div class=t style='left:531px;top:405px;'> The raw CAN message has a:</div>
<div class=t style='left:531px;top:415px;'>- Resolution of 1</div>
<div class=t style='left:531px;top:425px;'>- Minimum value of 0</div>
<div class=t style='left:531px;top:435px;'>- Maximum value of 4.294967E+09</div>
<div class=t style='left:755px;top:405px;letter-spacing:-0.34px;'>After applying the scaling and offset the CAN message</div>
<div class=t style='left:755px;top:415px;letter-spacing:-0.34px;'>has a:</div>
<div class=t style='left:755px;top:425px;letter-spacing:-0.34px;'>- Resolution of 1</div>
<div class=t style='left:755px;top:435px;letter-spacing:-0.34px;'>- Minimum value of 0</div>
<div class=t style='left:755px;top:445px;letter-spacing:-0.34px;'>- Maximum value of 4294967296</div>
<div class='a g' style='left:13px;top:457px;font-size:12px;line-height:12px;font-weight:bold;white-space:pre'>IMPORTANT: with this configuration, the data from the CAN message could get clipped when it is converted to an RT message</div>
<div class=a style='left:12px;top:485px;width:1px;height:36px;background:#808080;'></div>
<div class=a style='left:133px;top:485px;width:1px;height:36px;background:#808080;'></div>
<div class=a style='left:254px;top:485px;width:1px;height:36px;background:#808080;'></div>
<div class=a style='left:375px;top:485px;width:1px;height:36px;background:#808080;'></div>
<div class=a style='left:496px;top:485px;width:1px;height:36px;background:#808080;'></div>
<div class=a style='left:617px;top:485px;width:1px;height:49px;background:#808080;'></div>
<div class=a style='left:738px;top:485px;width:1px;height:49px;background:#808080;'></div>
<div class=a style='left:859px;top:485px;width:1px;height:49px;background:#808080;'></div>
<div class=a style='left:980px;top:485px;width:1px;height:49px;background:#808080;'></div>
<div class=a style='left:12px;top:510px;width:969px;height:1px;background:#808080;'></div>
<div class=t style='left:15px;top:486px;'>CAN Byte 1</div>
<div class=t style='left:14px;top:497px;'>7</div>
<div class=a style='left:27px;top:497px;width:1px;height:13px;background:#808080;'></div>
<div class=t style='left:29px;top:497px;'>6</div>
<div class=a style='left:42px;top:497px;width:1px;height:13px;background:#808080;'></div>
<div class=t style='left:44px;top:497px;'>5</div>
<div class=a style='left:57px;top:497px;width:1px;height:13px;background:#808080;'></div>
<div class=t style='left:59px;top:497px;'>4</div>
<div class=a style='left:73px;top:497px;width:1px;height:13px;background:#808080;'></div>
<div class=t style='left:75px;top:497px;'>3</div>
<div class=a style='left:88px;top:497px;width:1px;height:13px;background:#808080;'></div>
<div class=t style='left:90px;top:497px;'>2</div>
<div class=a style='left:103px;top:497px;width:1px;height:13px;background:#808080;'></div>
<div class=t style='left:105px;top:497px;'>1</div>
<div class=a style='left:118px;top:497px;width:1px;height:13px;background:#808080;'></div>
<div class=t style='left:120px;top:497px;'>0</div>
<div class=t style='left:136px;top:486px;'>CAN Byte 2</div>
<div class=t style='left:135px;top:497px;'>15</div>
<div class=a style='left:148px;top:497px;width:1px;height:13px;background:#808080;'></div>
<div class=t style='left:150px;top:497px;'>14</div>
<div class=a style='left:163px;top:497px;width:1px;height:13px;background:#808080;'></div>
<div class=t style='left:165px;top:497px;'>13</div>
<div class=a style='left:178px;top:497px;width:1px;height:13px;background:#808080;'></div>
<div class=t style='left:180px;top:497px;'>12</div>
<div class=a style='left:194px;top:497px;width:1px;height:13px;background:#808080;'></div>
<div class=t style='left:196px;top:497px;'>11</div>
<div class=a style='left:209px;top:497px;width:1px;height:13px;background:#808080;'></div>
<div class=t style='left:211px;top:497px;'>10</div>
<div class=a style='left:224px;top:497px;width:1px;height:13px;background:#808080;'></div>
<div class=t style='left:226px;top:497px;'>9</div>
<div class=a style='left:239px;top:497px;width:1px;height:13px;background:#808080;'></div>
<div class=t style='left:241px;top:497px;'>8</div>
<div class=t style='left:257px;top:486px;'>CAN Byte 3</div>
<div class=t style='left:256px;top:497px;'>23</div>
<div class=a style='left:269px;top:497px;width:1px;height:13px;background:#808080;'></div>
<div class=t style='left:271px;top:497px;'>22</div>
<div class=a style='left:284px;top:497px;width:1px;height:13px;background:#808080;'></div>
<div class=t style='left:286px;top:497px;'>21</div>
<div class=a style='left:299px;top:497px;width:1px;height:13px;background:#808080;'></div>
<div class=t style='left:301px;top:497px;'>20</div>
<div class=a style='left:315px;top:497px;width:1px;height:13px;background:#808080;'></div>
<div class=t style='left:317px;top:497px;'>19</div>
<div class=a style='left:330px;top:497px;width:1px;height:13px;background:#808080;'></div>
<div class=t style='left:332px;top:497px;'>18</div>
<div class=a style='left:345px;top:497px;width:1px;height:13px;background:#808080;'></div>
<div class=t style='left:347px;top:497px;'>17</div>
<div class=a style='left:360px;top:497px;width:1px;height:13px;background:#808080;'></div>
<div class=t style='left:362px;top:497px;'>16</div>
<div class=t style='left:378px;top:486px;'>CAN Byte 4</div>
<div class=t style='left:377px;top:497px;'>31</div>
<div class=a style='left:390px;top:497px;width:1px;height:13px;background:#808080;'></div>
<div class=t style='left:392px;top:497px;'>30</div>
<div class=a style='left:405px;top:497px;width:1px;height:13px;background:#808080;'></div>
<div class=t style='left:407px;top:497px;'>29</div>
<div class=a style='left:420px;top:497px;width:1px;height:13px;background:#808080;'></div>
<div class=t style='left:422px;top:497px;'>28</div>
<div class=a style='left:436px;top:497px;width:1px;height:13px;background:#808080;'></div>
<div class=t style='left:438px;top:497px;'>27</div>
<div class=a style='left:451px;top:497px;width:1px;height:13px;background:#808080;'></div>
<div class=t style='left:453px;top:497px;'>26</div>
<div class=a style='left:466px;top:497px;width:1px;height:13px;background:#808080;'></div>
<div class=t style='left:468px;top:497px;'>25</div>
<div class=a style='left:481px;top:497px;width:1px;height:13px;background:#808080;'></div>
<div class=t style='left:483px;top:497px;'>24</div>
<div class=t style='left:499px;top:486px;'>CAN Byte 5</div>
<div class=t style='left:498px;top:497px;'>39</div>
<div class=a style='left:511px;top:497px;width:1px;height:13px;background:#808080;'></div>
<div class=t style='left:513px;top:497px;'>38</div>
<div class=a style='left:526px;top:497px;width:1px;height:13px;background:#808080;'></div>
<div class=t style='left:528px;top:497px;'>37</div>
<div class=a style='left:541px;top:497px;width:1px;height:13px;background:#808080;'></div>
<div class=t style='left:543px;top:497px;'>36</div>
<div class=a style='left:557px;top:497px;width:1px;height:13px;background:#808080;'></div>
<div class=t style='left:559px;top:497px;'>35</div>
<div class=a style='left:572px;top:497px;width:1px;height:13px;background:#808080;'></div>
<div class=t style='left:574px;top:497px;'>34</div>
<div class=a style='left:587px;top:497px;width:1px;height:13px;background:#808080;'></div>
<div class=t style='left:589px;top:497px;'>33</div>
<div class=a style='left:602px;top:497px;width:1px;height:13px;background:#808080;'></div>
<div class=t style='left:604px;top:497px;'>32</div>
<div class=t style='left:620px;top:486px;'>CAN Byte 6</div>
<div class=t style='left:619px;top:497px;'>47</div>
<div class=a style='left:632px;top:497px;width:1px;height:13px;background:#808080;'></div>
<div class=t style='left:634px;top:497px;'>46</div>
<div class=a style='left:647px;top:497px;width:1px;height:13px;background:#808080;'></div>
<div class=t style='left:649px;top:497px;'>45</div>
<div class=a style='left:662px;top:497px;width:1px;height:13px;background:#808080;'></div>
<div class=t style='left:664px;top:497px;'>44</div>
<div class=a style='left:678px;top:497px;width:1px;height:13px;background:#808080;'></div>
<div class=t style='left:680px;top:497px;'>43</div>
<div class=a style='left:693px;top:497px;width:1px;height:13px;background:#808080;'></div>
<div class=t style='left:695px;top:497px;'>42</div>
<div class=a style='left:708px;top:497px;width:1px;height:13px;background:#808080;'></div>
<div class=t style='left:710px;top:497px;'>41</div>
<div class=a style='left:723px;top:497px;width:1px;height:13px;background:#808080;'></div>
<div class=t style='left:725px;top:497px;'>40</div>
<div class=t style='left:741px;top:486px;'>CAN Byte 7</div>
<div class=t style='left:740px;top:497px;'>55</div>
<div class=a style='left:753px;top:497px;width:1px;height:13px;background:#808080;'></div>
<div class=t style='left:755px;top:497px;'>54</div>
<div class=a style='left:768px;top:497px;width:1px;height:13px;background:#808080;'></div>
<div class=t style='left:770px;top:497px;'>53</div>
<div class=a style='left:783px;top:497px;width:1px;height:13px;background:#808080;'></div>
<div class=t style='left:785px;top:497px;'>52</div>
<div class=a style='left:799px;top:497px;width:1px;height:13px;background:#808080;'></div>
<div class=t style='left:801px;top:497px;'>51</div>
<div class=a style='left:814px;top:497px;width:1px;height:13px;background:#808080;'></div>
<div class=t style='left:816px;top:497px;'>50</div>
<div class=a style='left:829px;top:497px;width:1px;height:13px;background:#808080;'></div>
<div class=t style='left:831px;top:497px;'>49</div>
<div class=a style='left:844px;top:497px;width:1px;height:13px;background:#808080;'></div>
<div class=t style='left:846px;top:497px;'>48</div>
<div class=t style='left:862px;top:486px;'>CAN Byte 8</div>
<div class=t style='left:861px;top:497px;'>63</div>
<div class=a style='left:874px;top:497px;width:1px;height:13px;background:#808080;'></div>
<div class=t style='left:876px;top:497px;'>62</div>
<div class=a style='left:889px;top:497px;width:1px;height:13px;background:#808080;'></div>
<div class=t style='left:891px;top:497px;'>61</div>
<div class=a style='left:904px;top:497px;width:1px;height:13px;background:#808080;'></div>
<div class=t style='left:906px;top:497px;'>60</div>
<div class=a style='left:920px;top:497px;width:1px;height:13px;background:#808080;'></div>
<div class=t style='left:922px;top:497px;'>59</div>
<div class=a style='left:935px;top:497px;width:1px;height:13px;background:#808080;'></div>
<div class=t style='left:937px;top:497px;'>58</div>
<div class=a style='left:950px;top:497px;width:1px;height:13px;background:#808080;'></div>
<div class=t style='left:952px;top:497px;'>57</div>
<div class=a style='left:965px;top:497px;width:1px;height:13px;background:#808080;'></div>
<div class=t style='left:967px;top:497px;'>56</div>
<div class=a style='left:12px;top:521px;width:485px;height:12px;background:#0000ff;'></div>
<div class=a style='left:13px;top:522px;width:14px;height:10px;background:#ece9d8;'></div>
<div class=t style='left:14px;top:522px;'>M</div>
<div class=a style='left:28px;top:522px;width:14px;height:10px;background:#ece9d8;'></div>
<div class=t style='left:29px;top:522px;'>31</div>
<div class=a style='left:43px;top:522px;width:14px;height:10px;background:#ece9d8;'></div>
<div class=t style='left:44px;top:522px;'>30</div>
<div class=a style='left:58px;top:522px;width:15px;height:10px;background:#ece9d8;'></div>
<div class=t style='left:59px;top:522px;'>29</div>
<div class=a style='left:74px;top:522px;width:14px;height:10px;background:#ece9d8;'></div>
<div class=t style='left:75px;top:522px;'>28</div>
<div class=a style='left:89px;top:522px;width:14px;height:10px;background:#ece9d8;'></div>
<div class=t style='left:90px;top:522px;'>27</div>
<div class=a style='left:104px;top:522px;width:14px;height:10px;background:#ece9d8;'></div>
<div class=t style='left:105px;top:522px;'>26</div>
<div class=a style='left:119px;top:522px;width:14px;height:10px;background:#ece9d8;'></div>
<div class=t style='left:120px;top:522px;'>25</div>
<div class=a style='left:134px;top:522px;width:14px;height:10px;background:#ece9d8;'></div>
<div class=t style='left:135px;top:522px;'>24</div>
<div class=a style='left:149px;top:522px;width:14px;height:10px;background:#ece9d8;'></div>
<div class=t style='left:150px;top:522px;'>23</div>
<div class=a style='left:164px;top:522px;width:14px;height:10px;background:#ece9d8;'></div>
<div class=t style='left:165px;top:522px;'>22</div>
<div class=a style='left:179px;top:522px;width:15px;height:10px;background:#ece9d8;'></div>
<div class=t style='left:180px;top:522px;'>21</div>
<div class=a style='left:195px;top:522px;width:14px;height:10px;background:#ece9d8;'></div>
<div class=t style='left:196px;top:522px;'>20</div>
<div class=a style='left:210px;top:522px;width:14px;height:10px;background:#ece9d8;'></div>
<div class=t style='left:211px;top:522px;'>19</div>
<div class=a style='left:225px;top:522px;width:14px;height:10px;background:#ece9d8;'></div>
<div class=t style='left:226px;top:522px;'>18</div>
<div class=a style='left:240px;top:522px;width:14px;height:10px;background:#ece9d8;'></div>
<div class=t style='left:241px;top:522px;'>17</div>
<div class=a style='left:255px;top:522px;width:14px;height:10px;background:#ece9d8;'></div>
<div class=t style='left:256px;top:522px;'>16</div>
<div class=a style='left:270px;top:522px;width:14px;height:10px;background:#ece9d8;'></div>
<div class=t style='left:271px;top:522px;'>15</div>
<div class=a style='left:285px;top:522px;width:14px;height:10px;background:#ece9d8;'></div>
<div class=t style='left:286px;top:522px;'>14</div>
<div class=a style='left:300px;top:522px;width:15px;height:10px;background:#ece9d8;'></div>
<div class=t style='left:301px;top:522px;'>13</div>
<div class=a style='left:316px;top:522px;width:14px;height:10px;background:#ece9d8;'></div>
<div class=t style='left:317px;top:522px;'>12</div>
<div class=a style='left:331px;top:522px;width:14px;height:10px;background:#ece9d8;'></div>
<div class=t style='left:332px;top:522px;'>11</div>
<div class=a style='left:346px;top:522px;width:14px;height:10px;background:#ece9d8;'></div>
<div class=t style='left:347px;top:522px;'>10</div>
<div class=a style='left:361px;top:522px;width:14px;height:10px;background:#ece9d8;'></div>
<div class=t style='left:362px;top:522px;'>9</div>
<div class=a style='left:376px;top:522px;width:14px;height:10px;background:#ece9d8;'></div>
<div class=t style='left:377px;top:522px;'>8</div>
<div class=a style='left:391px;top:522px;width:14px;height:10px;background:#ece9d8;'></div>
<div class=t style='left:392px;top:522px;'>7</div>
<div class=a style='left:406px;top:522px;width:14px;height:10px;background:#ece9d8;'></div>
<div class=t style='left:407px;top:522px;'>6</div>
<div class=a style='left:421px;top:522px;width:15px;height:10px;background:#ece9d8;'></div>
<div class=t style='left:422px;top:522px;'>5</div>
<div class=a style='left:437px;top:522px;width:14px;height:10px;background:#ece9d8;'></div>
<div class=t style='left:438px;top:522px;'>4</div>
<div class=a style='left:452px;top:522px;width:14px;height:10px;background:#ece9d8;'></div>
<div class=t style='left:453px;top:522px;'>3</div>
<div class=a style='left:467px;top:522px;width:14px;height:10px;background:#ece9d8;'></div>
<div class=t style='left:468px;top:522px;'>2</div>
<div class=a style='left:482px;top:522px;width:14px;height:10px;background:#ece9d8;'></div>
<div class=t style='left:483px;top:522px;'>L</div>
<div class=a style='left:12px;top:544px;width:185px;height:35px;border:1px solid #d0d0bf;border-radius:4px'></div>
<div class=t style='left:20px;top:539px;background:#ece9d8;padding:0 2px;color:#0046d5;font-size:10px'>Can Baud Rate</div>
<div class=a style='left:20px;top:555px;width:169px;height:18px;border:1px solid #7f9db9;background:#fff'></div>
<div class=a style='left:172px;top:557px;width:15px;height:14px;border-radius:2px;background:linear-gradient(160deg,#dce7fd 0%,#c3d3fd 50%,#b3c8f8 100%);border:1px solid #c6d5f8'></div>
<svg class=a style='left:172px;top:557px' width='15' height='14'><path d='M4 5.0 L7.5 9.0 L11 5.0' stroke='#4d6185' stroke-width='2.6' fill='none'/></svg>
<div class=t style='left:23px;top:559px;'>500 kbit</div>
<div class=t style='left:204px;top:547px;letter-spacing:-0.369px;'>IMPORTANT: Configuring the CAN to serial adapter requires the CAN protocol information to be available and some knowledge of the CAN system. Race Technology are happy to assist in</div>
<div class=t style='left:204px;top:557px;letter-spacing:-0.345px;'>doing this if required, but in most cases this support will be chargeable. For more information about this service, please contact salesΔrace-technology.com .</div>
<div class=a style='left:12px;top:604px;width:233px;height:46px;border:1px solid #d0d0bf;border-radius:4px'></div>
<div class=t style='left:19px;top:599px;background:#ece9d8;padding:0 2px;color:#0046d5;font-size:10px'>Send configuration</div>
<div class=a style='left:20px;top:615px;width:145px;height:18px;border:1px solid #7f9db9;background:#fff'></div>
<div class=a style='left:148px;top:617px;width:15px;height:14px;border-radius:2px;background:linear-gradient(160deg,#dce7fd 0%,#c3d3fd 50%,#b3c8f8 100%);border:1px solid #c6d5f8'></div>
<svg class=a style='left:148px;top:617px' width='15' height='14'><path d='M4 5.0 L7.5 9.0 L11 5.0' stroke='#4d6185' stroke-width='2.6' fill='none'/></svg>
<div class=t style='left:23px;top:619px;'>Serial Port 3(USB Adapter)</div>
<div class=a style='left:173px;top:616px;width:63px;height:17px;border:1px solid #003c74;border-radius:3px;background:linear-gradient(#fff 0%,#f7f7f3 40%,#eceae0 85%,#d6d0c5 100%)'></div>
<div class=t style='left:183px;top:620px;'>Send now!</div>
<div class=a style='left:252px;top:601px;width:13px;height:13px;border:1px solid #1c5180;background:linear-gradient(135deg,#dcdcd7 0%,#f4f4f0 70%,#fff 100%)'></div>
<div class=t style='left:267px;top:601px;letter-spacing:-0.62px;'>Enable OBD mode</div>
<div class=t style='left:388px;top:599px;letter-spacing:-0.375px;'>IMPORTANT: If OBD is enabled, and OBD is not available then the CAN adapter will not be able to establish communications.</div>
<div class=t style='left:252px;top:623px;letter-spacing:-0.437px;'>Enabling OBD mode uses Channel 15 of the CAN adapter data stream, so this will not be available for general use.  In OBD mode the baud rate cannot be manually</div>
<div class=t style='left:252px;top:633px;letter-spacing:-0.355px;'>set - it is automatically requested and measured from the vehicle</div>
</body></html>
